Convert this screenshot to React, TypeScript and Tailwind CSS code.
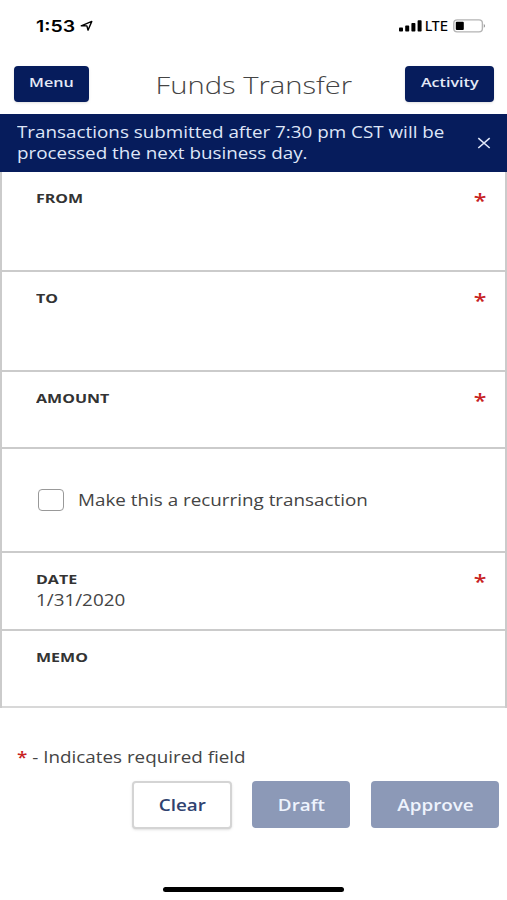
import type { ReactNode } from "react";
import { clsx } from "clsx";

// Wide lettering: Open Sans stretched horizontally
function Wide({ children, className }: { children: ReactNode; className?: string }) {
  return (
    <span className={clsx("inline-block whitespace-nowrap scale-x-[1.215]", className)}>
      {children}
    </span>
  );
}

function StatusBar() {
  return (
    <div className="flex h-[66px] items-start justify-between pt-[17px] pl-9 pr-[21px] text-black">
      <div className="flex h-[18px] items-center">
        <Wide className="w-[40px] origin-left font-['Inter'] text-[16px] font-semibold leading-none">1:53</Wide>
        <svg className="ml-[4px] h-3 w-[14px]" viewBox="0 0 14 12" fill="none">
          <path d="M1.2 5.8 11.8 1.4 8 10.2 6.9 5.9Z" stroke="currentColor" strokeWidth="1.4" strokeLinejoin="round" />
        </svg>
      </div>
      <div className="flex h-[18px] items-center">
        <svg className="h-3 w-[23px]" viewBox="0 0 23 12" fill="currentColor">
          <rect x="0" y="7.6" width="4" height="4" rx="0.8" />
          <rect x="6.2" y="5.6" width="4" height="6" rx="0.8" />
          <rect x="12.4" y="3" width="4" height="8.6" rx="0.8" />
          <rect x="18.6" y="0.2" width="4" height="11.4" rx="0.8" />
        </svg>
        <span className="ml-[3px] inline-block w-[28px] origin-left scale-x-[1.03] font-['Inter'] text-[13px] font-medium leading-none">
          LTE
        </span>
        <svg className="h-[14px] w-[33px]" viewBox="0 0 33 14">
          <rect x="0.8" y="0.9" width="28.6" height="12" rx="3.4" fill="none" stroke="#b4b4b4" strokeWidth="1.4" />
          <rect x="2.8" y="2.8" width="8" height="8.2" rx="1" fill="#000" />
          <path d="M30.8 5c1.6.5 1.6 3.3 0 3.8Z" fill="#909090" />
        </svg>
      </div>
    </div>
  );
}

function NavButton({ children, className }: { children: ReactNode; className: string }) {
  return (
    <button
      className={clsx(
        "flex h-9 items-center justify-center rounded-[4px] bg-[#061c5c] pb-[3px] text-[13.3px] font-semibold text-[#e4e9f6] shadow-sm",
        className
      )}
    >
      <Wide>{children}</Wide>
    </button>
  );
}

function Field({
  label,
  value,
  required,
  className,
}: {
  label: string;
  value?: string;
  required?: boolean;
  className: string;
}) {
  return (
    <div className={clsx("flex justify-between border-b-2 pl-[34px] pr-[19px]", className)}>
      <div className="flex flex-col items-start pt-4">
        <Wide className="origin-left text-[13.2px] font-bold leading-[21px] text-[#333]">{label}</Wide>
        {value && <Wide className="origin-left text-[15.5px] leading-5 text-[#444]">{value}</Wide>}
      </div>
      {required && (
        <Wide className="origin-right pt-[15px] text-[19px] font-semibold leading-[28px] text-[#c8221f]">*</Wide>
      )}
    </div>
  );
}

export default function App() {
  return (
    <div className="flex h-[900px] w-[507px] flex-col overflow-hidden bg-white font-['Open_Sans',sans-serif]">
      <StatusBar />

      <header className="flex h-[48px] items-start justify-between pl-[14px] pr-[13px]">
        <NavButton className="w-[75px]">Menu</NavButton>
        <h1 className="pl-[14px] text-[24px] font-light leading-[38px] text-[#444]">
          <Wide>Funds Transfer</Wide>
        </h1>
        <NavButton className="w-[89px]">Activity</NavButton>
      </header>

      <div className="flex h-[58px] items-center justify-between bg-[#061c5c] pl-[17px] pr-[16px] text-[#dfe6f8]">
        <p className="flex flex-col items-start pb-px text-[15.5px] leading-[21px]">
          <Wide className="origin-left">Transactions submitted after 7:30 pm CST will be</Wide>
          <Wide className="origin-left">processed the next business day.</Wide>
        </p>
        <svg className="h-[14px] w-[14px]" viewBox="0 0 14 14" fill="none">
          <path d="M1.3 2.2 12.7 12M12.7 2.2 1.3 12" stroke="currentColor" strokeWidth="1.6" />
        </svg>
      </div>

      <form className="border-l-2 border-r-2 border-[#cbcbcb]">
        <Field className="h-[100px] border-[#cbcbcb]" label="FROM" required />
        <Field className="h-[100px] border-[#cbcbcb]" label="TO" required />
        <Field className="h-[77px] border-[#cbcbcb]" label="AMOUNT" required />
        <label className="flex h-[104px] items-center border-b-2 border-[#cbcbcb] pl-9">
          <span className="h-[22px] w-[26px] rounded-[4px] border border-[#999] bg-white" />
          <Wide className="ml-[14px] origin-left pt-px text-[15.5px] text-[#444]">Make this a recurring transaction</Wide>
        </label>
        <Field className="h-[78px] border-[#cbcbcb]" label="DATE" value="1/31/2020" required />
        <Field className="h-[77px] border-[#d8d8d8]" label="MEMO" />
      </form>

      <p className="mt-[38px] flex pl-[17px] text-[15.5px] leading-[22px] text-[#444]">
        <Wide className="origin-left">
          <span className="font-semibold text-[#c8221f]">*</span> - Indicates required field
        </Wide>
      </p>

      <div className="mt-[13px] flex justify-end pr-2 text-[15.5px] font-semibold">
        <button className="flex h-[48px] w-[100px] items-center justify-center rounded-[4px] border-2 border-[#d4d4d4] bg-white pt-px text-[#2f4270] shadow-sm">
          <Wide>Clear</Wide>
        </button>
        <button className="ml-5 flex h-[47px] w-[98px] items-center justify-center rounded-[4px] bg-[#8c99b7] pt-[2px] text-[#eef3fd]">
          <Wide>Draft</Wide>
        </button>
        <button className="ml-[21px] flex h-[47px] w-[128px] items-center justify-center rounded-[4px] bg-[#8c99b7] pt-[2px] text-[#eef3fd]">
          <Wide>Approve</Wide>
        </button>
      </div>

      <div className="mt-auto mb-2 ml-[163px] h-[5px] w-[181px] rounded-full bg-black" />
    </div>
  );
}
